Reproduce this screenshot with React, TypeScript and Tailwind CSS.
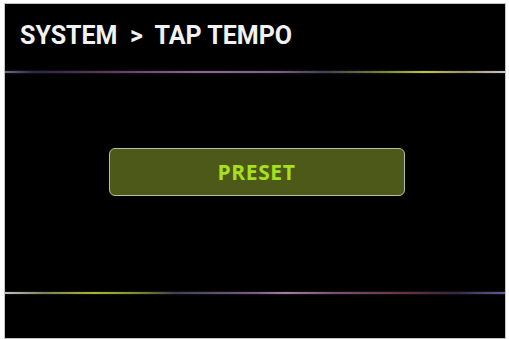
import React from "react";

export default function App() {
  return (
    <div className="w-[509px] h-[339px] bg-white pl-[4px] pt-[3px] overflow-hidden">
      <div className="w-[502px] h-[336px] border border-[#c4c4c4] bg-black flex flex-col">
        <div className="h-[67px] pt-[19px] pl-[15px]">
          <div
            className="text-[25px] leading-[25px] font-bold text-[#f2f2f2] tracking-[0px] whitespace-pre"
            style={{ fontFamily: "Roboto, 'Liberation Sans', sans-serif" }}
          >
            SYSTEM  &gt;  TAP TEMPO
          </div>
        </div>
        <div className="h-[2px] w-full bg-[linear-gradient(90deg,#6a6a80_0%,#2a2540_6%,#5a3858_20%,#8a6a92_40%,#7a6282_54%,#404052_64%,#7a8a28_76%,#b8c838_84%,#989860_92%,#c8c8c8_100%)] shadow-[0_0_2px_rgba(180,160,200,0.35)]" />
        <div className="flex-1 pt-[75px] flex justify-center">
          <div className="w-[296px] h-[48px] ml-[3px] rounded-[6px] border border-[#b6bea0] bg-[#4c5918] flex items-center justify-center">
            <span
              className="text-[21px] leading-[21px] font-bold text-[#a6e01e] tracking-[0.6px]"
              style={{ fontFamily: "'Open Sans', sans-serif" }}
            >
              PRESET
            </span>
          </div>
        </div>
        <div className="h-[2px] w-full bg-[linear-gradient(90deg,#c0c0c0_0%,#808058_8%,#a8b828_18%,#809028_26%,#404052_34%,#7a5e82_50%,#a080a0_56%,#7a5072_66%,#6a3240_80%,#342842_90%,#5a609a_100%)] shadow-[0_0_2px_rgba(180,160,200,0.35)]" />
        <div className="h-[44px]" />
      </div>
    </div>
  );
}
